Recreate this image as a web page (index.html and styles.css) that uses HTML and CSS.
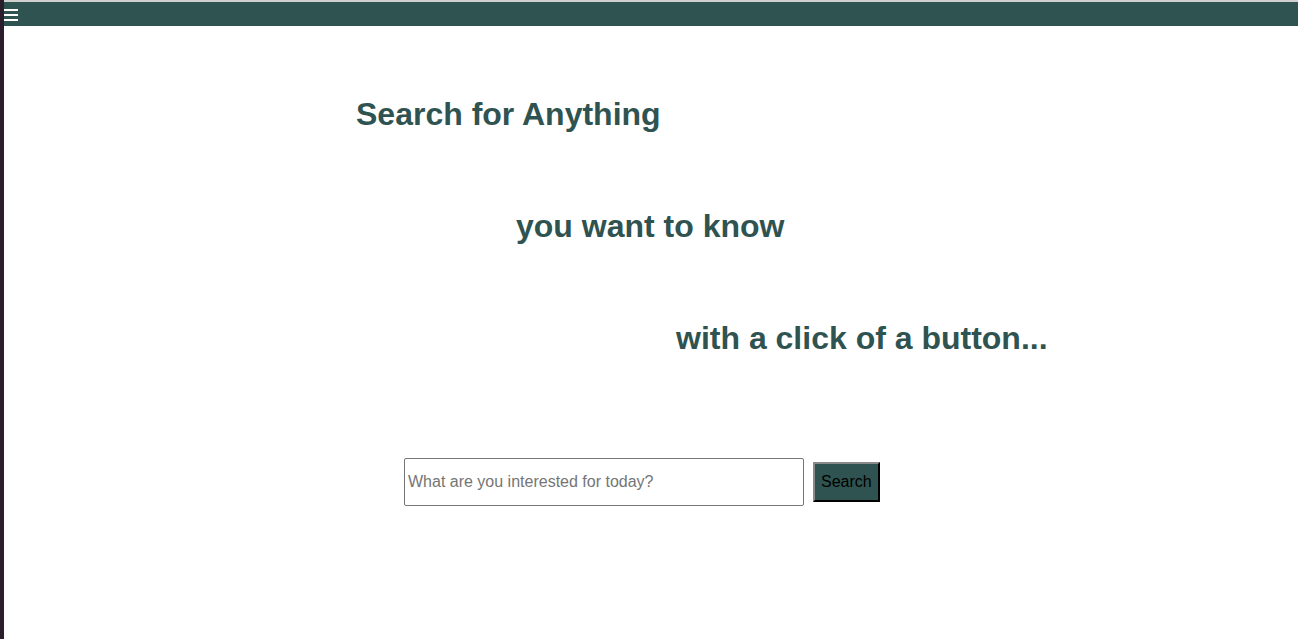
FILE: index.html
```html
<!DOCTYPE html>
<html lang="en">
<head>
<meta charset="utf-8">
<title>Search for Anything</title>
<link rel="stylesheet" href="styles.css">
</head>
<body>
<div class="page">
  <header class="topbar">
    <button class="menu" aria-label="menu">
      <svg width="14" height="14" viewBox="0 0 14 14"><rect x="0" y="1" width="14" height="2" fill="#fff"/><rect x="0" y="6" width="14" height="2" fill="#fff"/><rect x="0" y="11" width="14" height="2" fill="#fff"/></svg>
    </button>
  </header>
  <main class="content">
    <h1 class="line line-1">Search for Anything</h1>
    <h1 class="line line-2">you want to know</h1>
    <h1 class="line line-3">with a click of a button...</h1>
    <form class="search">
      <input class="search-input" type="text" placeholder="What are you interested for today?">
      <button class="search-btn" type="button">Search</button>
    </form>
  </main>
</div>
</body>
</html>
```
FILE: styles.css
```css
html, body {
  margin: 0;
  padding: 0;
  height: 100%;
  background: #fff;
  font-family: "Liberation Sans", Arial, sans-serif;
}
body {
  border-left: 4px solid #2c1d2c;
  box-sizing: border-box;
}
.page {
  padding-top: 2px;
  background: linear-gradient(#d0d0d0, #d0d0d0) top / 100% 2px no-repeat;
}
.topbar {
  height: 24px;
  background: #2f5350;
  display: flex;
  align-items: center;
}
.menu {
  border: 0;
  background: none;
  padding: 0;
  margin: 0;
  display: flex;
  width: 14px;
  height: 14px;
  margin-top: 1px;
}
.content {
  padding-top: 70px;
  padding-left: 352px;
  display: flex;
  flex-direction: column;
}
.line {
  margin: 0 0 75px 0;
  font-size: 32px;
  font-weight: bold;
  color: #2f5350;
  line-height: 37px;
}
.line-2 { margin-left: 160px; }
.line-3 { margin-left: 320px; margin-bottom: 101px; }
.search {
  display: flex;
  align-items: center;
  gap: 9px;
  margin-left: 48px;
}
.search-input {
  width: 400px;
  height: 48px;
  box-sizing: border-box;
  border: 1px solid #767676;
  border-radius: 2px;
  padding: 1px 3px;
  font-family: "Liberation Sans", Arial, sans-serif;
  font-size: 16px;
  color: #000;
}
.search-input::placeholder {
  color: #757575;
}
.search-btn {
  height: 40px;
  box-sizing: border-box;
  padding: 0 6px;
  background: #2f5350;
  border: 2px outset #767676;
  border-color: #8a8a8a #3a3a3a #3a3a3a #8a8a8a;
  font-family: "Liberation Sans", Arial, sans-serif;
  font-size: 16px;
  color: #000;
}
```
